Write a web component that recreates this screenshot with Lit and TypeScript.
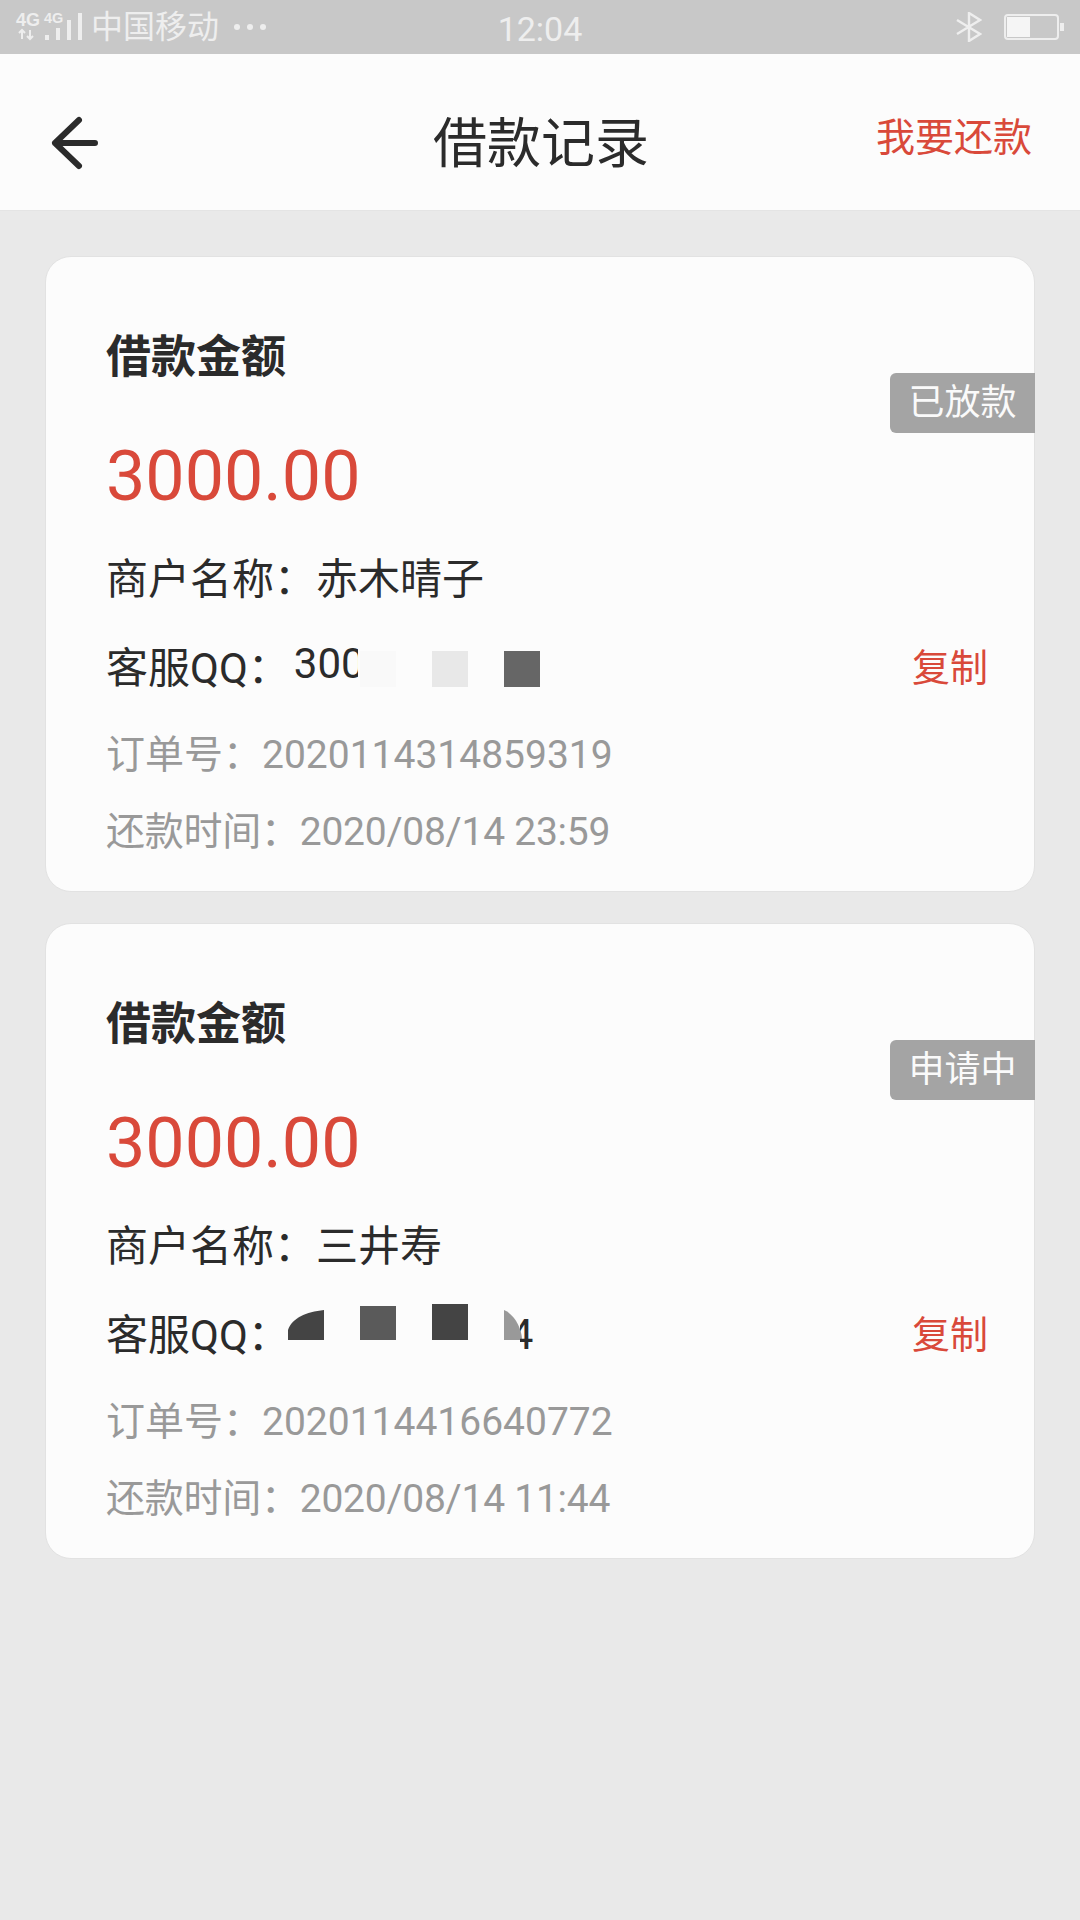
import { LitElement, html, css, svg } from 'lit';
import { customElement } from 'lit/decorators.js';

const quarterA = svg`<path d="M0 36V26C4 14 18 8 36 6V36Z" fill="#444"/>`;
const quarterB = svg`<path d="M0 6V36H18C18 24 10 10 0 6Z" fill="#999"/>`;

@customElement('loan-card')
class LoanCard extends LitElement {
  static properties = {
    status: {},
    merchant: {},
    order: {},
    due: {},
    variant: {},
  };

  status = '';
  merchant = '';
  order = '';
  due = '';
  variant = 'a';

  static styles = css`
    :host {
      display: block;
    }
    .card {
      position: relative;
      box-sizing: border-box;
      height: 636px;
      padding: 77px 46px 0 60px;
      background: #fcfcfc;
      border: 1px solid #e2e2e2;
      border-radius: 26px;
    }
    .title {
      height: 48px;
      line-height: 48px;
      font-size: 45px;
      font-weight: 700;
      color: #2b2b2b;
    }
    .amount {
      margin-top: 52px;
      height: 84px;
      line-height: 84px;
      font-size: 70px;
      color: #d9493a;
    }
    .row {
      display: flex;
      align-items: center;
      height: 60px;
      font-size: 42px;
      color: #2b2b2b;
    }
    .merchant {
      margin-top: 27px;
    }
    .qq {
      margin-top: 29px;
      justify-content: space-between;
    }
    .qq-left {
      display: flex;
      align-items: center;
    }
    .copy {
      font-size: 38px;
      color: #d9493a;
    }
    .mosaic {
      display: flex;
      align-items: flex-start;
      gap: 36px;
      margin-left: -2px;
      height: 36px;
      position: relative;
    }
    .mosaic.a {
      top: 5px;
    }
    .mosaic.b {
      top: -9px;
    }
    .digits {
      box-sizing: border-box;
      width: 72px;
      height: 46px;
      margin-right: -36px;
      margin-top: -10px;
      padding-left: 6px;
      line-height: 46px;
    }
    .digits span {
      display: block;
      width: 64px;
      overflow: hidden;
    }
    .sq {
      display: block;
      width: 36px;
      height: 36px;
    }
    .t1 {
      background: #f9f9f9;
    }
    .t2 {
      background: #e8e8e8;
    }
    .t3 {
      background: #666;
    }
    .t4 {
      background: #5a5a5a;
      height: 34px;
      margin-top: 2px;
    }
    .t5 {
      background: #444;
    }
    .last {
      position: absolute;
      left: 232px;
      top: 8px;
      width: 14px;
      overflow: hidden;
      line-height: 46px;
      text-indent: -10px;
      white-space: nowrap;
    }
    .meta {
      font-size: 39px;
      color: #999;
    }
    .order {
      margin-top: 27px;
    }
    .due {
      margin-top: 17px;
      letter-spacing: -0.25px;
    }
    .badge {
      position: absolute;
      top: 116px;
      right: -1px;
      box-sizing: border-box;
      width: 145px;
      height: 60px;
      line-height: 60px;
      text-align: center;
      font-size: 36px;
      color: #fafafa;
      background: #a4a4a4;
      border-radius: 6px 0 0 6px;
    }
  `;

  renderMosaic() {
    if (this.variant === 'a') {
      return html`<div class="mosaic a">
        <div class="digits"><span>300</span></div>
        <i class="sq t1"></i>
        <i class="sq t2"></i>
        <i class="sq t3"></i>
      </div>`;
    }
    return html`<div class="mosaic b">
      <svg class="sq" viewBox="0 0 36 36">${quarterA}</svg>
      <i class="sq t4"></i>
      <i class="sq t5"></i>
      <svg class="sq" viewBox="0 0 36 36">${quarterB}</svg>
      <span class="last">4</span>
    </div>`;
  }

  render() {
    return html`
      <div class="card">
        <div class="title">借款金额</div>
        <div class="amount">3000.00</div>
        <div class="row merchant">商户名称：${this.merchant}</div>
        <div class="row qq">
          <div class="qq-left">客服QQ：${this.renderMosaic()}</div>
          <div class="copy">复制</div>
        </div>
        <div class="row meta order">订单号：${this.order}</div>
        <div class="row meta due">还款时间：${this.due}</div>
        <div class="badge">${this.status}</div>
      </div>
    `;
  }
}

@customElement('app-root')
class AppRoot extends LitElement {
  static styles = css`
    :host {
      display: block;
      height: 1920px;
      background: #e9e9e9;
      font-family: Roboto, 'Noto Sans CJK SC', sans-serif;
    }
    .status {
      position: relative;
      display: flex;
      align-items: center;
      justify-content: space-between;
      box-sizing: border-box;
      height: 54px;
      padding: 0 16px;
      background: #c8c8c8;
      color: #eee;
    }
    .status-left,
    .status-right {
      display: flex;
      align-items: center;
    }
    .carrier {
      margin-left: 7px;
      font-size: 32px;
      line-height: 58px;
    }
    .dots {
      display: flex;
      gap: 7px;
      margin-left: 15px;
    }
    .dots i {
      width: 6px;
      height: 6px;
      border-radius: 50%;
      background: #eee;
    }
    .time {
      position: absolute;
      left: 0;
      right: 0;
      top: 0;
      text-align: center;
      font-size: 34px;
      line-height: 58px;
    }
    .net {
      display: block;
      overflow: visible;
    }
    .net text {
      font-family: 'Liberation Sans', sans-serif;
      font-weight: 700;
      fill: #eee;
    }
    .bt {
      margin-right: 22px;
    }
    .nav {
      display: grid;
      grid-template-columns: 1fr auto 1fr;
      align-items: center;
      box-sizing: border-box;
      height: 157px;
      padding: 14px 48px 0 50px;
      background: #fcfcfc;
      border-bottom: 1px solid #e4e4e4;
    }
    .back {
      display: block;
      margin-top: 8px;
    }
    .nav h1 {
      margin: 0;
      font-size: 54px;
      font-weight: 400;
      color: #2b2b2b;
    }
    .action {
      justify-self: end;
      margin-top: -10px;
      font-size: 39px;
      color: #d9493a;
    }
    .list {
      display: flex;
      flex-direction: column;
      gap: 31px;
      padding: 45px 45px 0;
    }
  `;

  render() {
    return html`
      <div class="status">
        <div class="status-left">
          <svg class="net" width="68" height="32" viewBox="0 0 68 32">
            <text x="0" y="15" font-size="18">4G</text>
            <text x="28" y="12" font-size="14.5">4G</text>
            <path d="M6 19v9M3 22l3-3 3 3M14 19v9M11 25l3 3 3-3" fill="none" stroke="#eee" stroke-width="2" />
            <path d="M29 24h4v5h-4zM40 17h4v12h-4zM51 9h4v20h-4zM62 2h4v27h-4z" fill="#eee" />
          </svg>
          <span class="carrier">中国移动</span>
          <span class="dots"><i></i><i></i><i></i></span>
        </div>
        <div class="time">12:04</div>
        <div class="status-right">
          <svg class="bt" width="26" height="30" viewBox="0 0 26 30">
            <path d="M1 8l23 14-11 7V1l11 7L1 22" fill="none" stroke="#eee" stroke-width="2.4" />
          </svg>
          <svg width="60" height="26" viewBox="0 0 60 26">
            <rect x="1" y="1" width="53" height="24" rx="3" fill="none" stroke="#eee" stroke-width="2" />
            <rect x="3" y="3" width="23" height="20" fill="#f5f5f5" />
            <rect x="56" y="9" width="4" height="8" fill="#eee" />
          </svg>
        </div>
      </div>
      <div class="nav">
        <svg class="back" width="52" height="56" viewBox="0 0 52 56">
          <path d="M45 28H5M29 5L5 28l24 23" fill="none" stroke="#2b2b2b" stroke-width="6" stroke-linecap="round" stroke-linejoin="round" />
        </svg>
        <h1>借款记录</h1>
        <div class="action">我要还款</div>
      </div>
      <div class="list">
        <loan-card status="已放款" merchant="赤木晴子" order="2020114314859319" due="2020/08/14 23:59" variant="a"></loan-card>
        <loan-card status="申请中" merchant="三井寿" order="2020114416640772" due="2020/08/14 11:44" variant="b"></loan-card>
      </div>
    `;
  }
}
